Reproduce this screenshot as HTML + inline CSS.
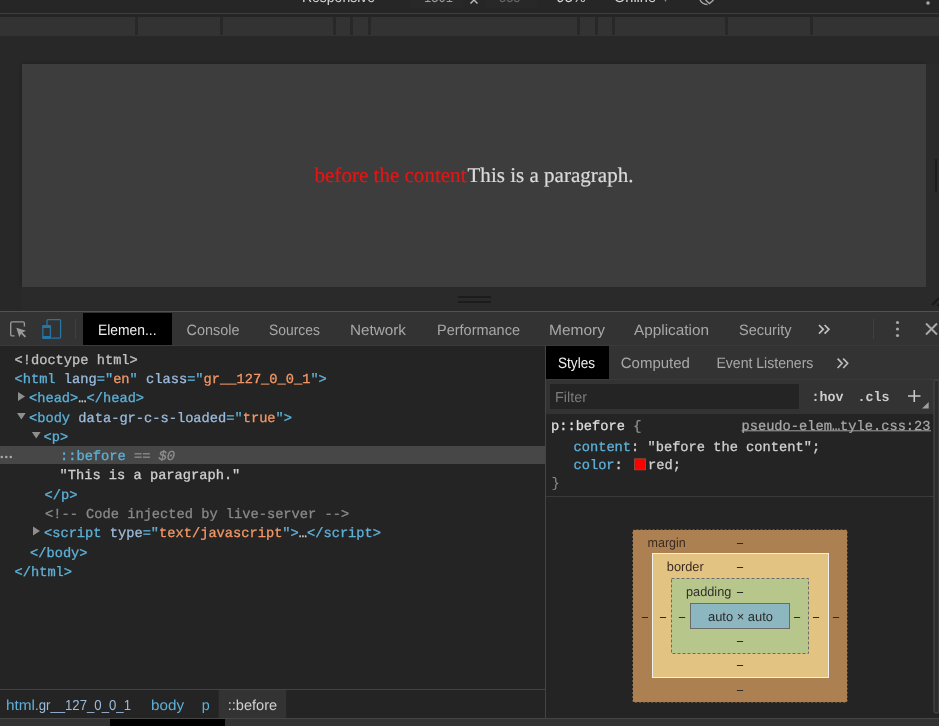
<!DOCTYPE html>
<html><head><meta charset="utf-8"><style>
html,body{margin:0;padding:0;background:#242424;width:939px;height:726px;overflow:hidden}
svg{display:block;will-change:transform}
</style></head><body>
<svg width="939" height="726" viewBox="0 0 939 726" text-rendering="geometricPrecision">
<defs><filter id="sh" x="-5%" y="-10%" width="110%" height="120%"><feDropShadow dx="0" dy="0" stdDeviation="3" flood-color="#000" flood-opacity="0.22"/></filter></defs>
<rect x="0" y="0" width="939" height="13" fill="#262626" />
<rect x="410" y="0" width="53" height="8" fill="#282828" />
<rect x="485" y="0" width="52" height="8" fill="#282828" />
<text x="302" y="2" font-size="15" fill="#d6d6d6" font-family='"Liberation Sans", sans-serif' textLength="73" lengthAdjust="spacingAndGlyphs" >Responsive</text>
<text x="424" y="2" font-size="15" fill="#9a9a9a" font-family='"Liberation Sans", sans-serif' textLength="29" lengthAdjust="spacingAndGlyphs" >1301</text>
<path d="M474 0 L470.5 3.5 M474 0 L477.5 3.5" fill="none" stroke="#c0c0c0" stroke-width="1.4" />
<text x="499" y="2" font-size="15" fill="#666666" font-family='"Liberation Sans", sans-serif' textLength="21.5" lengthAdjust="spacingAndGlyphs" >335</text>
<text x="556.6" y="2" font-size="15" fill="#d6d6d6" font-family='"Liberation Sans", sans-serif' textLength="29" lengthAdjust="spacingAndGlyphs" >93%</text>
<text x="614" y="2" font-size="15" fill="#d6d6d6" font-family='"Liberation Sans", sans-serif' textLength="42" lengthAdjust="spacingAndGlyphs" >Online</text>
<text x="663" y="2" font-size="10" fill="#888888" font-family='"Liberation Sans", sans-serif' >▾</text>
<path d="M700 0 Q702 4 707.5 4.5" fill="none" stroke="#a8a8a8" stroke-width="1.4" />
<path d="M705.5 0 L709.5 3.6 L713.5 0" fill="none" stroke="#a8a8a8" stroke-width="1.4" />
<circle cx="928" cy="3" r="1.8" fill="#a8a8a8"/>
<rect x="0" y="13" width="939" height="1" fill="#3e3e3e" />
<rect x="0" y="14" width="939" height="3" fill="#252525" />
<rect x="0" y="17" width="939" height="19" fill="#333333" />
<rect x="135" y="17" width="3" height="18" fill="#282828" />
<rect x="220" y="17" width="3" height="18" fill="#282828" />
<rect x="333" y="17" width="3" height="18" fill="#282828" />
<rect x="350" y="17" width="3" height="18" fill="#282828" />
<rect x="368" y="17" width="3" height="18" fill="#282828" />
<rect x="577" y="17" width="3" height="18" fill="#282828" />
<rect x="595" y="17" width="3" height="18" fill="#282828" />
<rect x="612" y="17" width="3" height="18" fill="#282828" />
<rect x="725" y="17" width="3" height="18" fill="#282828" />
<rect x="810" y="17" width="3" height="18" fill="#282828" />
<rect x="0" y="36" width="939" height="275" fill="#282828" />
<rect x="22" y="64" width="904" height="223" fill="#3c3c3c" filter="url(#sh)"/>
<text x="314.5" y="181.8" font-size="21" fill="#e81414" font-family='"Liberation Serif", serif' textLength="152" lengthAdjust="spacingAndGlyphs" stroke="#e81414" stroke-width="0.2">before the content</text>
<text x="467.5" y="181.8" font-size="21" fill="#dadada" font-family='"Liberation Serif", serif' textLength="166" lengthAdjust="spacingAndGlyphs" stroke="#dadada" stroke-width="0.2">This is a paragraph.</text>
<rect x="22" y="287" width="917" height="24" fill="#2a2a2a" />
<rect x="926" y="64" width="13" height="223" fill="#2a2a2a" />
<rect x="458" y="296" width="33" height="2" fill="#1c1c1c" />
<rect x="458" y="301" width="33" height="2" fill="#1c1c1c" />
<rect x="935" y="159" width="2" height="33" fill="#1c1c1c" />
<path d="M932 305 L939 298 M937.5 306 L939.5 304" fill="none" stroke="#1a1a1a" stroke-width="2" />
<rect x="0" y="311" width="939" height="1.5" fill="#525252" />
<rect x="0" y="312.5" width="939" height="0.5" fill="#2a2a2a" />
<rect x="0" y="313" width="939" height="32" fill="#333333" />
<rect x="0" y="345" width="939" height="1" fill="#3a3a3a" />
<rect x="0" y="346" width="939" height="372" fill="#242424" />
<path d="M14.6 335.9 H12.2 Q10.7 335.9 10.7 334.4 V323.4 Q10.7 321.9 12.2 321.9 H22.9 Q24.4 321.9 24.4 323.4 V326.5" fill="none" stroke="#9a9a9a" stroke-width="1.35" />
<path d="M16.3 327.8 L26 330.8 L22.4 332.5 L26.1 336.3 L24.8 337.6 L21.1 333.8 L19.3 337.3 Z" fill="#9a9a9a" />
<path d="M47 325 V320.6 Q47 319.6 48 319.6 H59.6 Q60.6 319.6 60.6 320.6 V337.1 Q60.6 338.1 59.6 338.1 H51.2" fill="none" stroke="#2676a5" stroke-width="1.3" />
<rect x="42.85" y="325.75" width="7.6" height="12.4" fill="none" stroke="#2676a5" stroke-width="1.3" rx="1"/>
<rect x="42.3" y="325.2" width="8.7" height="2.9" fill="#2676a5" rx="1"/>
<rect x="42.3" y="336" width="8.7" height="2.9" fill="#2676a5" rx="1"/>
<rect x="75" y="319" width="1" height="20" fill="#404040" />
<rect x="83" y="313" width="89" height="32" fill="#000000" />
<text x="98" y="335" font-size="15" fill="#f0f0f0" font-family='"Liberation Sans", sans-serif' textLength="58.5" lengthAdjust="spacingAndGlyphs" >Elemen...</text>
<text x="186.5" y="335" font-size="15" fill="#a8a8a8" font-family='"Liberation Sans", sans-serif' textLength="53" lengthAdjust="spacingAndGlyphs" >Console</text>
<text x="269" y="335" font-size="15" fill="#a8a8a8" font-family='"Liberation Sans", sans-serif' textLength="51" lengthAdjust="spacingAndGlyphs" >Sources</text>
<text x="350" y="335" font-size="15" fill="#a8a8a8" font-family='"Liberation Sans", sans-serif' textLength="56" lengthAdjust="spacingAndGlyphs" >Network</text>
<text x="437" y="335" font-size="15" fill="#a8a8a8" font-family='"Liberation Sans", sans-serif' textLength="83" lengthAdjust="spacingAndGlyphs" >Performance</text>
<text x="549" y="335" font-size="15" fill="#a8a8a8" font-family='"Liberation Sans", sans-serif' textLength="56" lengthAdjust="spacingAndGlyphs" >Memory</text>
<text x="634" y="335" font-size="15" fill="#a8a8a8" font-family='"Liberation Sans", sans-serif' textLength="75" lengthAdjust="spacingAndGlyphs" >Application</text>
<text x="739" y="335" font-size="15" fill="#a8a8a8" font-family='"Liberation Sans", sans-serif' textLength="52.5" lengthAdjust="spacingAndGlyphs" >Security</text>
<path d="M819 325 L823.3 329.3 L819 333.6 M824.6 325 L828.9 329.3 L824.6 333.6" fill="none" stroke="#c0c0c0" stroke-width="1.7" />
<rect x="873" y="319" width="1" height="20" fill="#404040" />
<circle cx="897.5" cy="322.5" r="1.6" fill="#a8a8a8"/><circle cx="897.5" cy="329" r="1.6" fill="#a8a8a8"/><circle cx="897.5" cy="335.5" r="1.6" fill="#a8a8a8"/>
<path d="M926 323.5 L937 334.5 M937 323.5 L926 334.5" fill="none" stroke="#a8a8a8" stroke-width="2" />
<rect x="0" y="446" width="545" height="18" fill="#474747" />
<text x="14.5" y="363.8" font-size="13.7" font-family='"Liberation Mono", monospace' textLength="123.3" lengthAdjust="spacingAndGlyphs" xml:space="preserve"><tspan fill="#c0c0c0" stroke="#c0c0c0" stroke-width="0.3">&lt;!doctype html&gt;</tspan></text>
<text x="14.5" y="383.1" font-size="13.7" font-family='"Liberation Mono", monospace' textLength="312.36" lengthAdjust="spacingAndGlyphs" xml:space="preserve"><tspan fill="#5db0d7" stroke="#5db0d7" stroke-width="0.3">&lt;html</tspan><tspan fill="#5db0d7" stroke="#5db0d7" stroke-width="0.3"> </tspan><tspan fill="#9bbbdc" stroke="#9bbbdc" stroke-width="0.3">lang</tspan><tspan fill="#5db0d7" stroke="#5db0d7" stroke-width="0.3">="</tspan><tspan fill="#f29766" stroke="#f29766" stroke-width="0.3">en</tspan><tspan fill="#5db0d7" stroke="#5db0d7" stroke-width="0.3">"</tspan><tspan fill="#5db0d7" stroke="#5db0d7" stroke-width="0.3"> </tspan><tspan fill="#9bbbdc" stroke="#9bbbdc" stroke-width="0.3">class</tspan><tspan fill="#5db0d7" stroke="#5db0d7" stroke-width="0.3">="</tspan><tspan fill="#f29766" stroke="#f29766" stroke-width="0.3">gr__127_0_0_1</tspan><tspan fill="#5db0d7" stroke="#5db0d7" stroke-width="0.3">"&gt;</tspan></text>
<path d="M18 392 L25 396.5 L18 401 Z" fill="#8e8e8e" />
<text x="29.0" y="402.40000000000003" font-size="13.7" font-family='"Liberation Mono", monospace' textLength="115.08" lengthAdjust="spacingAndGlyphs" xml:space="preserve"><tspan fill="#5db0d7" stroke="#5db0d7" stroke-width="0.3">&lt;head&gt;</tspan><tspan fill="#cfd0d0" stroke="#cfd0d0" stroke-width="0.3">…</tspan><tspan fill="#5db0d7" stroke="#5db0d7" stroke-width="0.3">&lt;/head&gt;</tspan></text>
<path d="M17 413 L25.7 413 L21.35 419.4 Z" fill="#8e8e8e" />
<text x="29.0" y="421.6" font-size="13.7" font-family='"Liberation Mono", monospace' textLength="263.04" lengthAdjust="spacingAndGlyphs" xml:space="preserve"><tspan fill="#5db0d7" stroke="#5db0d7" stroke-width="0.3">&lt;body</tspan><tspan fill="#5db0d7" stroke="#5db0d7" stroke-width="0.3"> </tspan><tspan fill="#9bbbdc" stroke="#9bbbdc" stroke-width="0.3">data-gr-c-s-loaded</tspan><tspan fill="#5db0d7" stroke="#5db0d7" stroke-width="0.3">="</tspan><tspan fill="#f29766" stroke="#f29766" stroke-width="0.3">true</tspan><tspan fill="#5db0d7" stroke="#5db0d7" stroke-width="0.3">"&gt;</tspan></text>
<path d="M31.9 432.1 L40.6 432.1 L36.25 438.6 Z" fill="#8e8e8e" />
<text x="43.5" y="440.8" font-size="13.7" font-family='"Liberation Mono", monospace' textLength="24.66" lengthAdjust="spacingAndGlyphs" xml:space="preserve"><tspan fill="#5db0d7" stroke="#5db0d7" stroke-width="0.3">&lt;p&gt;</tspan></text>
<circle cx="1.8" cy="457" r="1.3" fill="#a8a8a8"/><circle cx="6.3" cy="457" r="1.3" fill="#a8a8a8"/><circle cx="10.8" cy="457" r="1.3" fill="#a8a8a8"/>
<text x="60.0" y="460.1" font-size="13.7" font-family='"Liberation Mono", monospace' textLength="115.08" lengthAdjust="spacingAndGlyphs" xml:space="preserve"><tspan fill="#5db0d7" stroke="#5db0d7" stroke-width="0.3">::before</tspan><tspan fill="#8e8e8e" stroke="#8e8e8e" stroke-width="0.3"> == </tspan><tspan fill="#8e8e8e" stroke="#8e8e8e" stroke-width="0.3" font-style="italic">$0</tspan></text>
<text x="59.5" y="479.40000000000003" font-size="13.7" font-family='"Liberation Mono", monospace' textLength="180.84" lengthAdjust="spacingAndGlyphs" xml:space="preserve"><tspan fill="#cfd0d0" stroke="#cfd0d0" stroke-width="0.3">"This is a paragraph."</tspan></text>
<text x="44.5" y="498.6" font-size="13.7" font-family='"Liberation Mono", monospace' textLength="32.88" lengthAdjust="spacingAndGlyphs" xml:space="preserve"><tspan fill="#5db0d7" stroke="#5db0d7" stroke-width="0.3">&lt;/p&gt;</tspan></text>
<text x="45.0" y="518.0" font-size="13.7" font-family='"Liberation Mono", monospace' textLength="304.14" lengthAdjust="spacingAndGlyphs" xml:space="preserve"><tspan fill="#898989" stroke="#898989" stroke-width="0.3">&lt;!-- Code injected by live-server --&gt;</tspan></text>
<path d="M33 526.4 L40 530.9 L33 535.4 Z" fill="#8e8e8e" />
<text x="44.0" y="537.1999999999999" font-size="13.7" font-family='"Liberation Mono", monospace' textLength="337.02" lengthAdjust="spacingAndGlyphs" xml:space="preserve"><tspan fill="#5db0d7" stroke="#5db0d7" stroke-width="0.3">&lt;script</tspan><tspan fill="#5db0d7" stroke="#5db0d7" stroke-width="0.3"> </tspan><tspan fill="#9bbbdc" stroke="#9bbbdc" stroke-width="0.3">type</tspan><tspan fill="#5db0d7" stroke="#5db0d7" stroke-width="0.3">="</tspan><tspan fill="#f29766" stroke="#f29766" stroke-width="0.3">text/javascript</tspan><tspan fill="#5db0d7" stroke="#5db0d7" stroke-width="0.3">"&gt;</tspan><tspan fill="#cfd0d0" stroke="#cfd0d0" stroke-width="0.3">…</tspan><tspan fill="#5db0d7" stroke="#5db0d7" stroke-width="0.3">&lt;/script&gt;</tspan></text>
<text x="30.0" y="556.5" font-size="13.7" font-family='"Liberation Mono", monospace' textLength="57.54" lengthAdjust="spacingAndGlyphs" xml:space="preserve"><tspan fill="#5db0d7" stroke="#5db0d7" stroke-width="0.3">&lt;/body&gt;</tspan></text>
<text x="14.5" y="575.8" font-size="13.7" font-family='"Liberation Mono", monospace' textLength="57.54" lengthAdjust="spacingAndGlyphs" xml:space="preserve"><tspan fill="#5db0d7" stroke="#5db0d7" stroke-width="0.3">&lt;/html&gt;</tspan></text>
<rect x="545" y="346" width="1" height="372" fill="#444444" />
<rect x="546" y="346" width="393" height="33" fill="#333333" />
<rect x="546" y="346" width="63" height="33" fill="#000000" />
<text x="558" y="368" font-size="15" fill="#f0f0f0" font-family='"Liberation Sans", sans-serif' textLength="37" lengthAdjust="spacingAndGlyphs" >Styles</text>
<text x="620.7" y="368" font-size="15" fill="#a8a8a8" font-family='"Liberation Sans", sans-serif' textLength="69.3" lengthAdjust="spacingAndGlyphs" >Computed</text>
<text x="716.4" y="368" font-size="15" fill="#a8a8a8" font-family='"Liberation Sans", sans-serif' textLength="97" lengthAdjust="spacingAndGlyphs" >Event Listeners</text>
<path d="M837.6 358.6 L842.1 363.3 L837.6 368 M843.2 358.6 L847.7 363.3 L843.2 368" fill="none" stroke="#c0c0c0" stroke-width="1.6" />
<rect x="546" y="379" width="393" height="1" fill="#3a3a3a" />
<rect x="546" y="380" width="393" height="34" fill="#333333" />
<rect x="550" y="384" width="249" height="25" fill="#242424" />
<text x="555" y="401.5" font-size="14.5" fill="#7a7a7a" font-family='"Liberation Sans", sans-serif' textLength="32" lengthAdjust="spacingAndGlyphs" >Filter</text>
<text x="811.5" y="401" font-size="13.7" fill="#cccccc" font-family='"Liberation Mono", monospace' textLength="32" lengthAdjust="spacingAndGlyphs" font-weight="bold" >:hov</text>
<text x="857.5" y="401" font-size="13.7" fill="#cccccc" font-family='"Liberation Mono", monospace' textLength="32" lengthAdjust="spacingAndGlyphs" font-weight="bold" >.cls</text>
<path d="M908 396 L920.5 396 M914.25 390 L914.25 402" fill="none" stroke="#c8c8c8" stroke-width="1.6" />
<path d="M922 408.6 L928.7 408.6 L928.7 402 Z" fill="#a0a0a0" />
<rect x="546" y="414" width="388" height="82" fill="#242424" />
<text x="551" y="430" font-size="13.7" font-family='"Liberation Mono", monospace' textLength="90.42" lengthAdjust="spacingAndGlyphs" xml:space="preserve"><tspan fill="#dedede" stroke="#dedede" stroke-width="0.3">p::before</tspan><tspan fill="#c0c0c0" stroke="#c0c0c0" stroke-width="0.3"> </tspan><tspan fill="#8e8e8e" stroke="#8e8e8e" stroke-width="0.3">{</tspan></text>
<text x="741.5" y="430" font-size="13.7" fill="#a8a8a8" font-family='"Liberation Mono", monospace' textLength="189" lengthAdjust="spacingAndGlyphs" stroke="#a8a8a8" stroke-width="0.25">pseudo-elem…tyle.css:23</text>
<rect x="741.5" y="430.3" width="189.5" height="1" fill="#a0a0a0" />
<text x="573.5" y="451" font-size="13.7" font-family='"Liberation Mono", monospace' textLength="246.6" lengthAdjust="spacingAndGlyphs" xml:space="preserve"><tspan fill="#5db0d7" stroke="#5db0d7" stroke-width="0.3">content</tspan><tspan fill="#cfd0d0" stroke="#cfd0d0" stroke-width="0.3">: </tspan><tspan fill="#cfd0d0" stroke="#cfd0d0" stroke-width="0.3">"before the content"</tspan><tspan fill="#cfd0d0" stroke="#cfd0d0" stroke-width="0.3">;</tspan></text>
<text x="573.5" y="469" font-size="13.7" font-family='"Liberation Mono", monospace' textLength="57.54" lengthAdjust="spacingAndGlyphs" xml:space="preserve"><tspan fill="#5db0d7" stroke="#5db0d7" stroke-width="0.3">color</tspan><tspan fill="#cfd0d0" stroke="#cfd0d0" stroke-width="0.3">: </tspan></text>
<rect x="634.5" y="458.8" width="11" height="11" fill="#ff0000" stroke="#8a4a3a" stroke-width="1"/>
<text x="648" y="469" font-size="13.7" font-family='"Liberation Mono", monospace' textLength="32.88" lengthAdjust="spacingAndGlyphs" xml:space="preserve"><tspan fill="#cfd0d0" stroke="#cfd0d0" stroke-width="0.3">red;</tspan></text>
<text x="551.5" y="487" font-size="13.7" fill="#8e8e8e" font-family='"Liberation Mono", monospace' >}</text>
<rect x="546" y="496" width="388" height="1" fill="#3a3a3a" />
<rect x="632.5" y="529.5" width="215" height="173" fill="#ad8052" stroke="#1f1f1f" stroke-width="1" stroke-dasharray="2,2" rx="2"/>
<rect x="652.5" y="553.5" width="176" height="124" fill="#e3c381" stroke="#f0f0f0" stroke-width="1"/>
<rect x="671.5" y="578.5" width="137" height="75" fill="#b7c68a" stroke="#6b6b6b" stroke-width="1" stroke-dasharray="3,2"/>
<rect x="690.5" y="603.5" width="99" height="25" fill="#8cb6c0" stroke="#6b6b6b" stroke-width="1"/>
<text x="647.5" y="547" font-size="13" fill="#3a2b22" font-family='"Liberation Sans", sans-serif' textLength="38.3" lengthAdjust="spacingAndGlyphs" >margin</text>
<text x="666.8" y="570.7" font-size="13" fill="#3a2b22" font-family='"Liberation Sans", sans-serif' textLength="36.9" lengthAdjust="spacingAndGlyphs" >border</text>
<text x="686" y="595.8" font-size="13" fill="#2f2f2f" font-family='"Liberation Sans", sans-serif' textLength="45.3" lengthAdjust="spacingAndGlyphs" >padding</text>
<text x="708" y="621" font-size="13" fill="#2a2a2a" font-family='"Liberation Sans", sans-serif' textLength="65" lengthAdjust="spacingAndGlyphs" >auto × auto</text>
<rect x="736.9" y="543" width="6.2" height="1.0" fill="#2a2a2a" />
<rect x="736.9" y="567" width="6.2" height="1.0" fill="#2a2a2a" />
<rect x="736.9" y="592" width="6.2" height="1.0" fill="#2a2a2a" />
<rect x="736.9" y="641" width="6.2" height="1.0" fill="#2a2a2a" />
<rect x="736.9" y="665" width="6.2" height="1.0" fill="#2a2a2a" />
<rect x="736.9" y="690" width="6.2" height="1.0" fill="#2a2a2a" />
<rect x="641.9" y="617" width="6.2" height="1.0" fill="#2a2a2a" />
<rect x="659.9" y="617" width="6.2" height="1.0" fill="#2a2a2a" />
<rect x="678.9" y="617" width="6.2" height="1.0" fill="#2a2a2a" />
<rect x="793.9" y="617" width="6.2" height="1.0" fill="#2a2a2a" />
<rect x="812.9" y="617" width="6.2" height="1.0" fill="#2a2a2a" />
<rect x="832.9" y="617" width="6.2" height="1.0" fill="#2a2a2a" />
<rect x="934" y="380" width="5" height="333" fill="#2c2c2c" stroke="#4a4a4a" stroke-width="1" rx="2"/>
<rect x="0" y="689" width="545" height="1" fill="#444444" />
<rect x="0" y="690" width="545" height="28" fill="#242424" />
<text x="6" y="709.6" font-size="14.5" fill="#5db0d7" font-family='"Liberation Sans", sans-serif' textLength="29" lengthAdjust="spacingAndGlyphs" >html</text>
<text x="35" y="709.6" font-size="14.5" fill="#9bbbdc" font-family='"Liberation Sans", sans-serif' textLength="96" lengthAdjust="spacingAndGlyphs" >.gr__127_0_0_1</text>
<text x="151" y="709.6" font-size="14.5" fill="#5db0d7" font-family='"Liberation Sans", sans-serif' textLength="33" lengthAdjust="spacingAndGlyphs" >body</text>
<text x="201.7" y="709.6" font-size="14.5" fill="#5db0d7" font-family='"Liberation Sans", sans-serif' textLength="8" lengthAdjust="spacingAndGlyphs" >p</text>
<rect x="218.7" y="690" width="67.5" height="28" fill="#333333" />
<text x="227.7" y="709.6" font-size="14.5" fill="#d0d0d0" font-family='"Liberation Sans", sans-serif' textLength="49.4" lengthAdjust="spacingAndGlyphs" >::before</text>
<rect x="0" y="718" width="939" height="1" fill="#444444" />
<rect x="0" y="719" width="939" height="7" fill="#333333" />
<rect x="110" y="719" width="115" height="7" fill="#000000" />
</svg>
</body></html>
